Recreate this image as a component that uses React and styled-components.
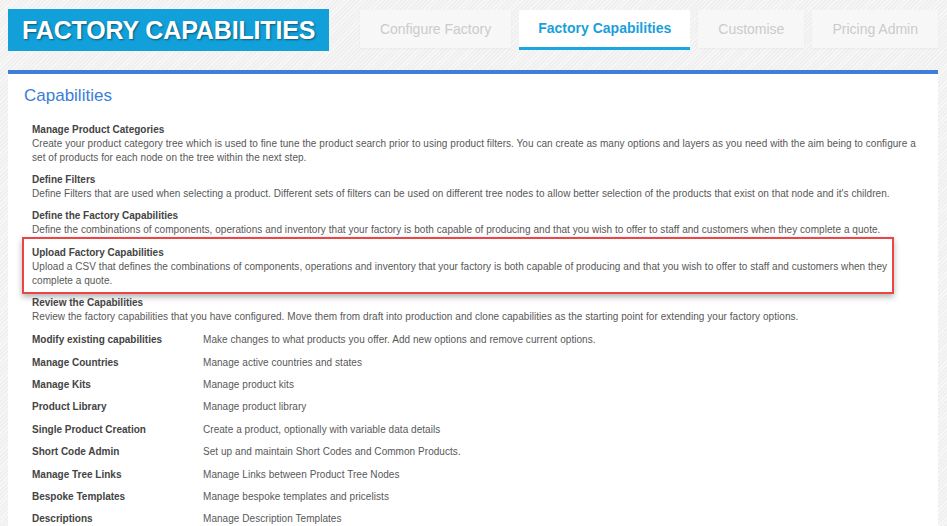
import styled, { createGlobalStyle, css } from 'styled-components'

const GlobalStyle = createGlobalStyle`
  html, body {
    margin: 0;
    padding: 0;
    overflow: hidden;
  }
  body {
    font-family: 'Liberation Sans', Arial, sans-serif;
    background-color: #f0f0f0;
    background-image: repeating-linear-gradient(
      135deg,
      rgba(255, 255, 255, 0.55) 0px,
      rgba(255, 255, 255, 0.55) 1px,
      transparent 1px,
      transparent 3px
    );
  }
`

const Page = styled.div`
  padding: 9px 9px 0 8px;
  min-height: 526px;
  box-sizing: border-box;
`

const Header = styled.div`
  display: flex;
  justify-content: space-between;
  align-items: flex-start;
  margin-bottom: 19px;
`

const Banner = styled.h1`
  margin: 0;
  padding: 0 14px;
  height: 42px;
  line-height: 43px;
  background: #12a0da;
  color: white;
  font-size: 25px;
  font-weight: bold;
  letter-spacing: -0.15px;
  text-shadow: 1px 1px 2px rgba(0, 0, 0, 0.45);
`

const Tabs = styled.div`
  display: flex;
  gap: 8px;
  margin-top: 1px;
`

const Tab = styled.div`
  padding: 0 20px;
  height: 38px;
  line-height: 38px;
  font-size: 14px;
  color: #cbcbcb;
  background: rgba(248, 248, 248, 0.85);
  box-shadow: 0 1px 2px rgba(0, 0, 0, 0.04);
  ${p => p.$active && css`
    padding: 0 19px;
    height: 37px;
    line-height: 37px;
    background: white;
    color: #1a9fdb;
    font-weight: bold;
    border-bottom: 3px solid #19a6e3;
    box-shadow: none;
  `}
`

const Panel = styled.div`
  background: white;
  border-top: 4px solid #3f7fdb;
  padding: 12px 16px 20px 16px;
  min-height: 440px;
`

const Heading = styled.h2`
  margin: 0 0 17px 0;
  font-size: 17px;
  line-height: 20px;
  font-weight: normal;
  color: #3b7dd8;
`

const Content = styled.div`
  padding-left: 8px;
  font-size: 10px;
  line-height: 14px;
  color: #585858;
`

const Section = styled.div`
  margin-top: 8.2px;
  &:first-child {
    margin-top: 0;
  }
  ${p => p.$highlight && css`
    margin: 0 0 -6px -10px;
    width: 872px;
    box-sizing: border-box;
    padding: 6.5px 4px 4px 8px;
    border: 2px solid #ec4545;
    box-shadow: 0 3px 6px rgba(0, 0, 0, 0.3);
  `}
`

const Title = styled.div`
  font-weight: bold;
  color: #444;
`

const Text = styled.div`
  letter-spacing: 0.05px;
`

const LinkTable = styled.div`
  margin-top: 5px;
`

const Row = styled.div`
  display: grid;
  grid-template-columns: 171px 1fr;
  padding: 4.2px 0;
`

const sections = [
  {
    title: 'Manage Product Categories',
    text: 'Create your product category tree which is used to fine tune the product search prior to using product filters. You can create as many options and layers as you need with the aim being to configure a set of products for each node on the tree within the next step.',
  },
  {
    title: 'Define Filters',
    text: "Define Filters that are used when selecting a product. Different sets of filters can be used on different tree nodes to allow better selection of the products that exist on that node and it's children.",
  },
  {
    title: 'Define the Factory Capabilities',
    text: 'Define the combinations of components, operations and inventory that your factory is both capable of producing and that you wish to offer to staff and customers when they complete a quote.',
  },
  {
    title: 'Upload Factory Capabilities',
    text: 'Upload a CSV that defines the combinations of components, operations and inventory that your factory is both capable of producing and that you wish to offer to staff and customers when they complete a quote.',
    highlight: true,
  },
  {
    title: 'Review the Capabilities',
    text: 'Review the factory capabilities that you have configured. Move them from draft into production and clone capabilities as the starting point for extending your factory options.',
  },
]

const links = [
  ['Modify existing capabilities', 'Make changes to what products you offer. Add new options and remove current options.'],
  ['Manage Countries', 'Manage active countries and states'],
  ['Manage Kits', 'Manage product kits'],
  ['Product Library', 'Manage product library'],
  ['Single Product Creation', 'Create a product, optionally with variable data details'],
  ['Short Code Admin', 'Set up and maintain Short Codes and Common Products.'],
  ['Manage Tree Links', 'Manage Links between Product Tree Nodes'],
  ['Bespoke Templates', 'Manage bespoke templates and pricelists'],
  ['Descriptions', 'Manage Description Templates'],
]

function App() {
  return (
    <Page>
      <GlobalStyle />
      <Header>
        <Banner>FACTORY CAPABILITIES</Banner>
        <Tabs>
          <Tab>Configure Factory</Tab>
          <Tab $active>Factory Capabilities</Tab>
          <Tab>Customise</Tab>
          <Tab>Pricing Admin</Tab>
        </Tabs>
      </Header>
      <Panel>
        <Heading>Capabilities</Heading>
        <Content>
          {sections.map(s => (
            <Section key={s.title} $highlight={s.highlight}>
              <Title>{s.title}</Title>
              <Text>{s.text}</Text>
            </Section>
          ))}
          <LinkTable>
            {links.map(([name, desc]) => (
              <Row key={name}>
                <Title>{name}</Title>
                <Text>{desc}</Text>
              </Row>
            ))}
          </LinkTable>
        </Content>
      </Panel>
    </Page>
  )
}

export default App
